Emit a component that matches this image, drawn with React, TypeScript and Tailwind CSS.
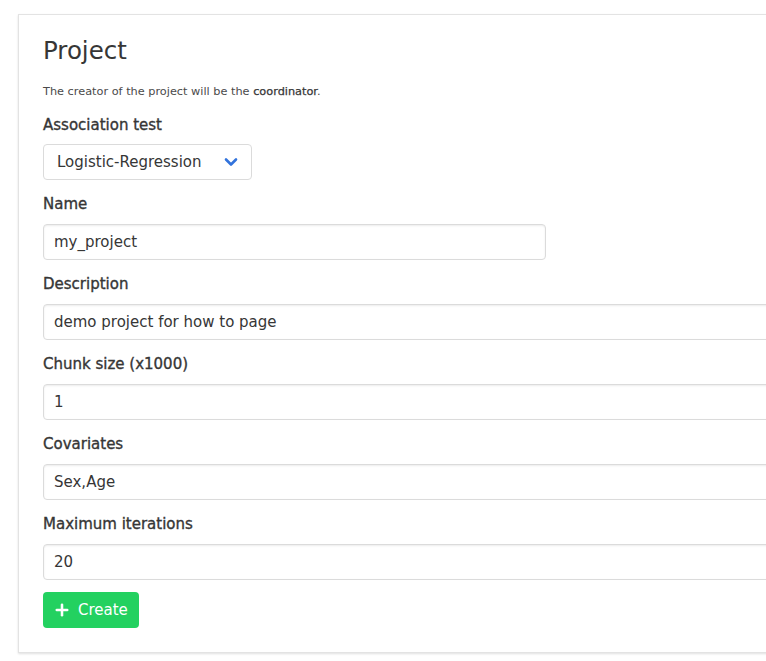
import { Plus } from 'lucide-react'

const fields = [
  { label: 'Name', value: 'my_project', wide: false },
  { label: 'Description', value: 'demo project for how to page', wide: true },
  { label: 'Chunk size (x1000)', value: '1', wide: true },
  { label: 'Covariates', value: 'Sex,Age', wide: true },
  { label: 'Maximum iterations', value: '20', wide: true },
]

export default function App() {
  return (
    <div className="h-[661px] w-[766px] overflow-hidden bg-white font-['DejaVu_Sans',sans-serif] text-[#363636]">
      <div className="ml-[18px] mt-[14px] w-[820px] border border-[#e3e3e3] bg-white px-[24px] pb-[24px] pt-[19px] shadow-[0_1px_2px_rgba(0,0,0,0.12)]">
        <h1 className="text-[24.5px] leading-[34px] text-[#363636]">Project</h1>
        <p className="mt-[16px] text-[11.3px] leading-[16px] text-[#4a4a4a]">
          The creator of the project will be the <span className="text-[#363636] [-webkit-text-stroke:0.25px_#363636]">coordinator</span>.
        </p>

        <div className="mt-[14px]">
          <label className="block pt-[1px] text-[15px] leading-[20px] [-webkit-text-stroke:0.35px_#363636]">Association test</label>
          <div className="mt-[9px] flex h-[36px] w-[209px] items-center justify-between rounded-[4px] border border-[#dbdbdb] bg-white pl-[13px] pr-[13px]">
            <span className="text-[15px] text-[#363636]">Logistic-Regression</span>
            <svg width="14" height="10" viewBox="0 0 14 10" fill="none">
              <path d="M2 2.5 L7 7.5 L12 2.5" stroke="#3273dc" strokeWidth="2.6" strokeLinecap="round" strokeLinejoin="round" />
            </svg>
          </div>
        </div>

        {fields.map((f) => (
          <div key={f.label} className="mt-[13px]">
            <label className="block pt-[1px] text-[15px] leading-[20px] [-webkit-text-stroke:0.35px_#363636]">{f.label}</label>
            <div
              className={`mt-[10px] flex h-[36px] items-center rounded-[4px] border border-[#dbdbdb] bg-white px-[10px] shadow-[inset_0_1px_2px_rgba(10,10,10,0.08)] ${
                f.wide ? 'w-[760px]' : 'w-[503px]'
              }`}
            >
              <span className="text-[15px] text-[#363636]">{f.value}</span>
            </div>
          </div>
        ))}

        <button className="mt-[12px] flex h-[36px] items-center gap-[7px] rounded-[4px] bg-[#23d160] pl-[10px] pr-[11px] text-[15px] text-white">
          <Plus size={18} strokeWidth={3.4} />
          Create
        </button>
      </div>
    </div>
  )
}
